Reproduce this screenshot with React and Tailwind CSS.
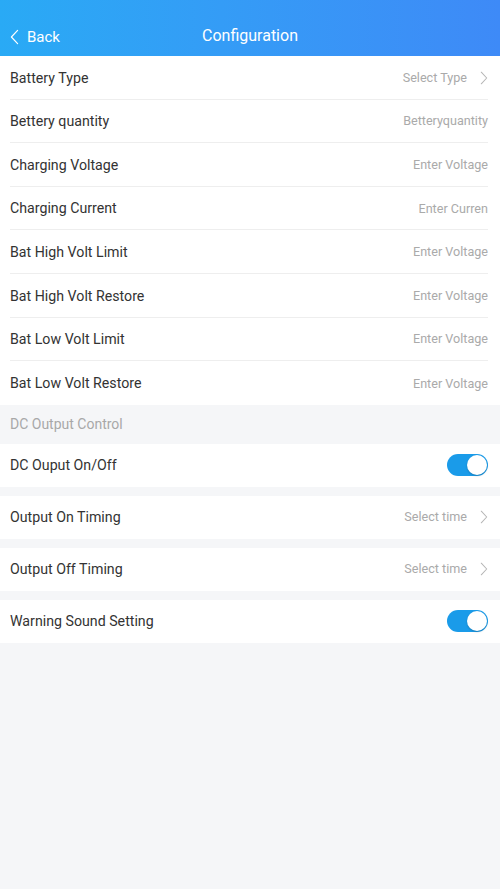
import React, { useState } from 'react';

const Chevron = ({ className }) => (
  <svg className={className} viewBox="0 0 10 18" fill="none" stroke="currentColor">
    <path d="M1.5 1.5L8.5 9L1.5 16.5" strokeWidth={1.3} strokeLinecap="round" strokeLinejoin="round" />
  </svg>
);

const Toggle = ({ on, onClick }) => (
  <button
    onClick={onClick}
    className={`relative w-[41px] h-[22px] rounded-full transition-colors ${on ? 'bg-[#1a9be9]' : 'bg-[#d9d9d9]'}`}
  >
    <span
      className={`absolute top-[1px] w-[20px] h-[20px] rounded-full bg-white shadow-[0_1px_2px_rgba(0,0,0,0.2)] transition-all ${on ? 'left-[20px]' : 'left-[1px]'}`}
    />
  </button>
);

const batteryRows = [
  { label: 'Battery Type', value: 'Select Type', arrow: true },
  { label: 'Bettery quantity', value: 'Betteryquantity' },
  { label: 'Charging Voltage', value: 'Enter Voltage' },
  { label: 'Charging Current', value: 'Enter Curren' },
  { label: 'Bat High Volt Limit', value: 'Enter Voltage' },
  { label: 'Bat High Volt Restore', value: 'Enter Voltage' },
  { label: 'Bat Low Volt Limit', value: 'Enter Voltage' },
  { label: 'Bat Low Volt Restore', value: 'Enter Voltage' },
];

const App = () => {
  const [dcOn, setDcOn] = useState(true);
  const [sound, setSound] = useState(true);

  return (
    <div className="min-h-[889px] bg-[#f5f6f8] font-['Roboto',sans-serif] text-[#333]">
      {/* Header */}
      <div className="h-[56px] bg-gradient-to-r from-[#29aaf5] to-[#3e8af7] flex items-end pb-[8px] px-[10px] relative text-white">
        <div className="flex items-center gap-[8px]">
          <Chevron className="w-[9px] h-[16px] rotate-180" />
          <span className="text-[15px]">Back</span>
        </div>
        <div className="absolute left-0 right-0 bottom-[8px] text-center text-[16px] pointer-events-none">
          Configuration
        </div>
      </div>

      {/* Battery settings */}
      <div className="bg-white">
        {batteryRows.map((row, i) => (
          <div key={row.label} className="pl-[10px] pr-[12px]">
            <div
              className={`h-[43.6px] pt-[2px] flex items-center justify-between ${i < batteryRows.length - 1 ? 'border-b border-[#eeeeee]' : ''}`}
            >
              <span className="text-[14.2px]">{row.label}</span>
              <div className="flex items-center gap-[13px] text-[#aaaaaa]">
                <span className="text-[12.6px]">{row.value}</span>
                {row.arrow && <Chevron className="w-[8px] h-[14px] text-[#b5b5b5]" />}
              </div>
            </div>
          </div>
        ))}
      </div>

      {/* DC Output Control */}
      <div className="h-[39px] flex items-center px-[10px] text-[14px] text-[#a8a8a8]">DC Output Control</div>

      <div className="flex flex-col gap-[9px]">
        <div className="bg-white h-[43px] flex items-center justify-between pl-[10px] pr-[12px]">
          <span className="text-[14.2px]">DC Ouput On/Off</span>
          <Toggle on={dcOn} onClick={() => setDcOn(!dcOn)} />
        </div>
        <div className="bg-white h-[43px] flex items-center justify-between pl-[10px] pr-[12px]">
          <span className="text-[14.2px]">Output On Timing</span>
          <div className="flex items-center gap-[13px] text-[#aaaaaa]">
            <span className="text-[12.6px]">Select time</span>
            <Chevron className="w-[8px] h-[14px] text-[#b5b5b5]" />
          </div>
        </div>
        <div className="bg-white h-[43px] flex items-center justify-between pl-[10px] pr-[12px]">
          <span className="text-[14.2px]">Output Off Timing</span>
          <div className="flex items-center gap-[13px] text-[#aaaaaa]">
            <span className="text-[12.6px]">Select time</span>
            <Chevron className="w-[8px] h-[14px] text-[#b5b5b5]" />
          </div>
        </div>
        <div className="bg-white h-[43px] flex items-center justify-between pl-[10px] pr-[12px]">
          <span className="text-[14.2px]">Warning Sound Setting</span>
          <Toggle on={sound} onClick={() => setSound(!sound)} />
        </div>
      </div>
    </div>
  );
};

export default App;
